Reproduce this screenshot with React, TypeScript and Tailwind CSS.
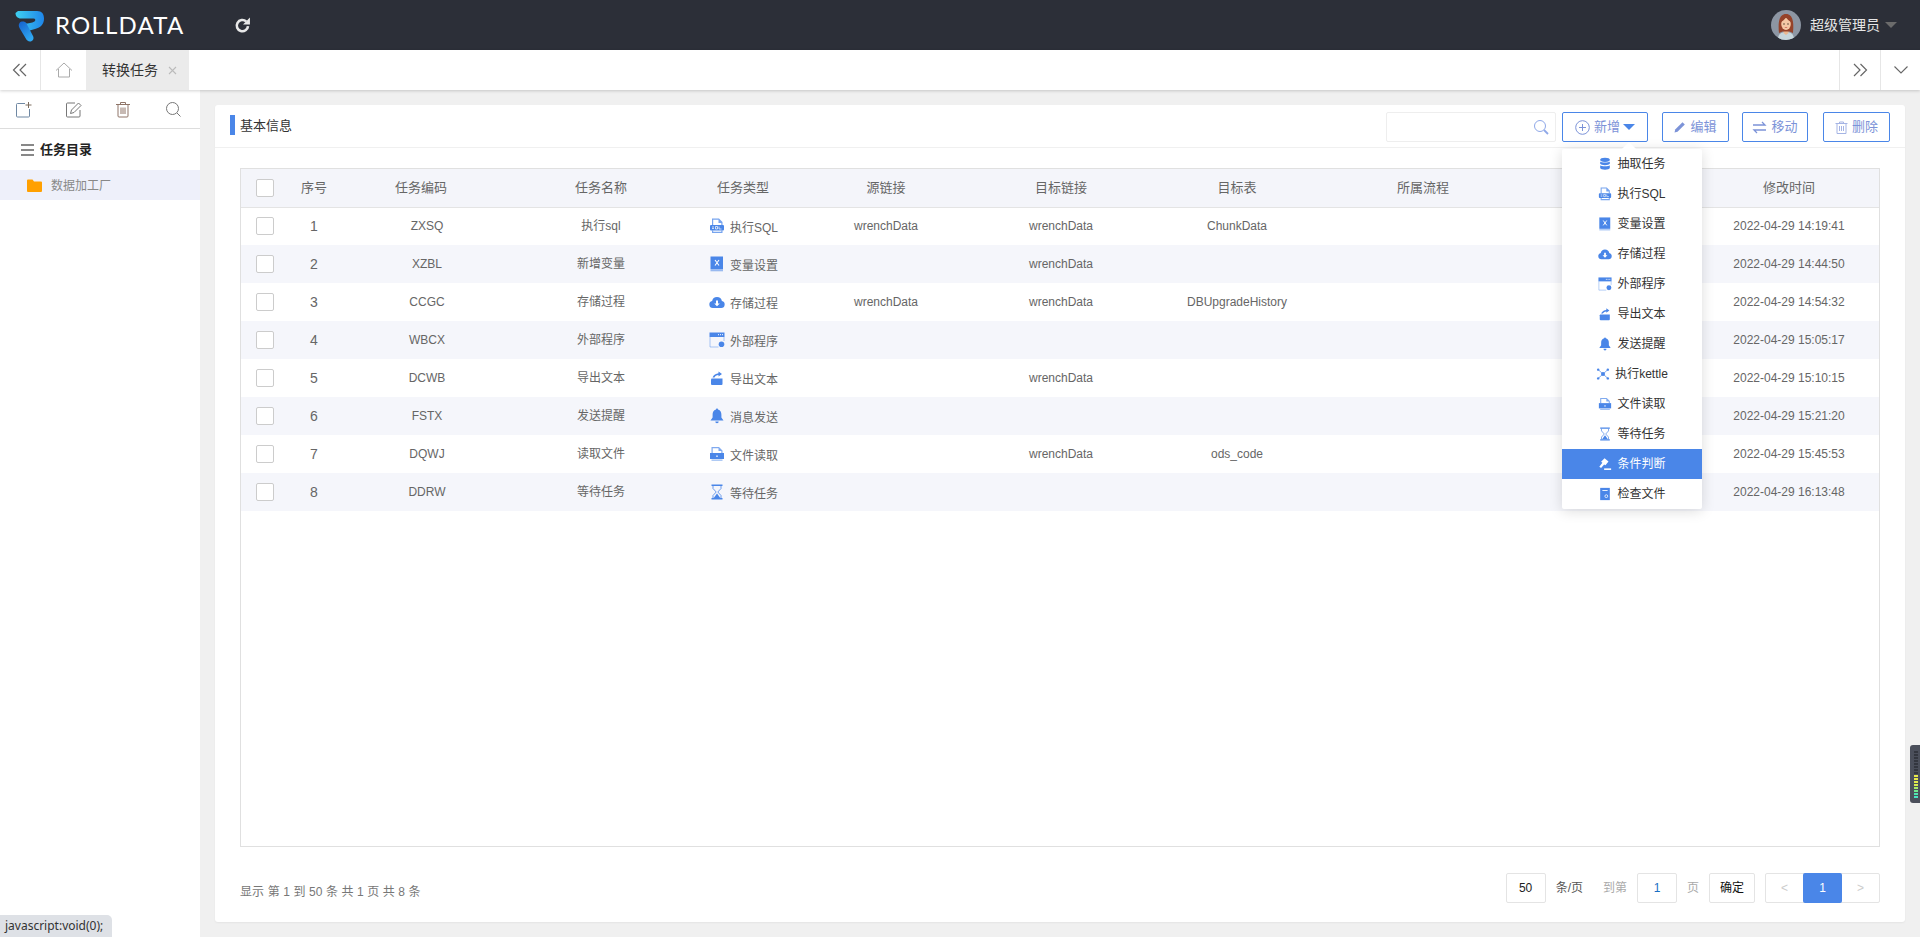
import { ReactNode } from "react";

type IconKind = "db" | "sql" | "xfile" | "cloud" | "window" | "export" | "bell" | "kettle" | "read" | "hourglass" | "gavel" | "check";

const BLUE = "#4a86e8";

function TaskIcon(props: { kind: IconKind; size?: number; color?: string }) {
    const c = props.color ?? BLUE;
    const paths: Record<IconKind, ReactNode> = {
        db: <>
            <ellipse cx="8" cy="3.2" rx="5.5" ry="2.4" fill={c} />
            <path d="M2.500 5.200c1 1.600 10 1.600 11 0v2.600c-1 2-10 2-11 0z" fill={c} />
            <path d="M2.500 9.400c1 1.600 10 1.600 11 0v3.200c-.6 2.600-10.400 2.600-11 0z" fill={c} />
        </>,
        sql: <>
            <path d="M3 .5h7l3.500 3.500v3h-1.200V5H9.500V1.700H4.200V7H3z" fill={c} opacity=".75" />
            <rect x="1" y="7" width="14" height="5.500" rx="1" fill={c} />
            <path d="M3 12.500h1.200v1.300h8.100v-1.300h1.200V15H3z" fill={c} opacity=".75" />
            <path d="M3 9h2M3 10.500h2M6.500 8.500h2v2.500h-2zM10 8.500V11h2.500" stroke="#fff" strokeWidth=".7" fill="none" />
        </>,
        xfile: <>
            <path d="M1.500 .5H14v13H1.500z" fill={c} />
            <path d="M1.500 14h12.500v1.300H1.500z" fill={c} opacity=".55" />
            <path d="M6 4l4 5.500M10 4L6 9.500" stroke="#fff" strokeWidth="1.100" />
        </>,
        cloud: <>
            <path d="M3.800 14a3.600 3.600 0 0 1-.7-7.100 5 5 0 0 1 9.800 0A3.600 3.600 0 0 1 12.200 14z" fill={c} />
            <path d="M7 6.500h2v3h1.800L8 12.300 5.200 9.500H7z" fill="#fff" />
        </>,
        window: <>
            <path d="M.5 .5h15v4.500H.5z" fill={c} />
            <path d="M1 5v10h8.500M15 5v4" stroke={c} strokeWidth=".9" fill="none" opacity=".5" />
            <circle cx="12.500" cy="12.300" r="2.800" fill={c} />
            <path d="M9 2.700h1M11 2.700h1M13 2.700h1" stroke="#fff" strokeWidth="1" />
        </>,
        export: <>
            <path d="M2.500 8.500h11V14a1 1 0 0 1-1 1h-9.500a1 1 0 0 1-1-1V9.500z" fill={c} />
            <path d="M3.500 7.500C4.500 5 7 3.500 9.500 3.300V1.500L13 4 9.500 6.500V5C7.500 5.200 6 6.200 5.500 7.500z" fill={c} />
        </>,
        bell: <>
            <path d="M8 .5c.7 0 1 .5 1 1 2.600.6 3.400 2.800 3.400 5.200v2.800L14.500 12.500h-13L3.600 9.500V6.700C3.600 4.300 4.400 2.100 7 1.500c0-.5.3-1 1-1z" fill={c} />
            <path d="M6.300 13.500h3.400A1.700 1.700 0 0 1 8 15.300a1.700 1.700 0 0 1-1.700-1.800z" fill={c} />
        </>,
        kettle: <>
            <circle cx="8" cy="8" r="2.300" fill={c} />
            <g stroke={c} strokeWidth=".8"><path d="M8 8L2.500 3M8 8l5.500-5M8 8l-5.500 5M8 8l5.500 5" /></g>
            <circle cx="2.500" cy="3" r="1.400" fill={c} /><circle cx="13.500" cy="3" r="1.400" fill={c} />
            <circle cx="2.500" cy="13" r="1.400" fill={c} /><circle cx="13.500" cy="13" r="1.400" fill={c} />
        </>,
        read: <>
            <path d="M2.500 1h7.500l3.500 3.500V7h-1.200V5H9.500V2.200H3.700V7H2.500z" fill={c} opacity=".7" />
            <rect x="1" y="7" width="14" height="6" fill={c} />
            <path d="M2.500 13.500h11v1.300h-11z" fill={c} opacity=".55" />
            <rect x="7.300" y="9.500" width="1.400" height="1.400" fill="#fff" />
        </>,
        hourglass: <>
            <path d="M2.500 .5h11V2h-11zM2.500 14h11v1.500h-11z" fill={c} />
            <path d="M4 2v2.500L7.200 8 4 11.500V14M12 2v2.500L8.800 8l3.200 3.500V14" stroke={c} strokeWidth="1" fill="none" opacity=".8" />
            <path d="M8 9.500l3.300 4.500H4.700z" fill={c} />
        </>,
        gavel: <>
            <path d="M7.500 1.500l4.500 3.500-3.500 4.500-1.500-1L3.500 12.500 1.500 11l3.500-4.500-1.500-1z" fill={c} />
            <path d="M7 13h8v1.800H7z" fill={c} />
        </>,
        check: <>
            <path d="M2.500 1h11v14h-11z" fill={c} />
            <path d="M5 4h6" stroke="#fff" strokeWidth="1" />
            <circle cx="9.500" cy="10.500" r="1.600" fill="none" stroke="#fff" strokeWidth=".9" />
        </>
    };
    const s = props.size ?? 16;
    return <svg width={s} height={s} viewBox="0 0 16 16" className="shrink-0">{paths[props.kind]}</svg>;
}

function Logo() {
    return <svg width="30" height="32" viewBox="0 0 30 32">
        <defs>
            <linearGradient id="lg1" x1="0" y1="0" x2="1" y2="0">
                <stop offset="0" stopColor="#3fd0f0" />
                <stop offset="1" stopColor="#1f86ea" />
            </linearGradient>
            <linearGradient id="lg2" x1="0" y1="0" x2="0.6" y2="1">
                <stop offset="0" stopColor="#1560cc" />
                <stop offset="1" stopColor="#2fa8f2" />
            </linearGradient>
        </defs>
        <path d="M3 1H22C27 1 29 4 29 8.500C29 14 26 17.500 20 19L13 21L10 13.500C13 13.500 17 13 19.500 11.500C21 10.500 20.500 8.500 18.500 8.500H6C2.500 8.500 0.500 6 0.500 3Z" fill="url(#lg1)" />
        <path d="M4.500 13C6 11 10 11 11.500 13.500L18 26C19.500 29 17.500 31.500 15 31.500C13 31.500 11.500 30 10.500 28L4.500 18C3.500 16 3.500 14.500 4.500 13Z" fill="url(#lg2)" />
    </svg>;
}

function Avatar() {
    return <svg width="30" height="30" viewBox="0 0 30 30" className="rounded-full">
        <rect width="30" height="30" fill="#8d96a3" />
        <path d="M7 30c0-6 3-8 8-8s8 2 8 8z" fill="#c7d6dc" />
        <path d="M12.500 18h5v5l-2.500 2-2.500-2z" fill="#eab892" />
        <path d="M8 23C7 14 7.500 4 15 4s8 10 7 19l-3.500-1.500H11.500z" fill="#96432a" />
        <ellipse cx="15" cy="14" rx="4.800" ry="6" fill="#f5c8a5" />
        <path d="M10 12c2-1 4-3 5-5 1 2 3 4 5 5 0-4-2-6-5-6s-5 2-5 6z" fill="#96432a" />
        <circle cx="13" cy="14" r=".7" fill="#3b2a20" /><circle cx="17" cy="14" r=".7" fill="#3b2a20" />
        <path d="M13.800 17.500h2.400" stroke="#c4584c" strokeWidth=".7" />
    </svg>;
}

function RefreshIcon() {
    return <svg width="17" height="17" viewBox="0 0 16 16" fill="none">
        <path d="M13.200 8.500A5.300 5.300 0 1 1 11.500 4.200" stroke="#e8e8e8" strokeWidth="2.400" />
        <path d="M8.500 7L15 7V.5z" fill="#e8e8e8" />
    </svg>;
}

function ChevronsLeft(props: { flip?: boolean }) {
    return <svg width="16" height="16" viewBox="0 0 16 16" fill="none" className={props.flip ? "rotate-180" : ""}>
        <path d="M7.500 2L1.500 8l6 6M14 2L8 8l6 6" stroke="#666" strokeWidth="1.200" />
    </svg>;
}

function HomeIcon() {
    return <svg width="18" height="16" viewBox="0 0 18 16" fill="none" stroke="#aaa" strokeWidth="1">
        <path d="M1 8.500L9 1l8 7.500M3.500 7v8h11V7" />
    </svg>;
}

const TOOL_STROKE = "#777";

function ToolIcon(props: { kind: "add" | "edit" | "del" | "search" }) {
    const p: Record<string, ReactNode> = {
        add: <>
            <path d="M10 2.500H2.500a1 1 0 0 0-1 1V15a1 1 0 0 0 1 1h11a1 1 0 0 0 1-1V8" stroke="#6f88a3" />
            <path d="M13.500 1v6M10.500 4h6" stroke="#7d6d5e" />
        </>,
        edit: <>
            <path d="M15 9v6a1 1 0 0 1-1 1H2.500a1 1 0 0 1-1-1V3a1 1 0 0 1 1-1H10" stroke={TOOL_STROKE} />
            <path d="M5.500 12.500l1-3.500 7-7 2.500 2.500-7 7z" stroke={TOOL_STROKE} />
        </>,
        del: <>
            <path d="M1 3.500h14M5.500 3.500V1.500h5v2M3 3.500V15a1 1 0 0 0 1 1h8a1 1 0 0 0 1-1V3.500" stroke="#8f7568" />
            <path d="M6 6.500v6.500M8 6.500v6.500M10 6.500v6.500" stroke="#8f7568" />
        </>,
        search: <>
            <circle cx="7.500" cy="7.500" r="6" stroke={TOOL_STROKE} />
            <path d="M12 12l3.500 3.500" stroke={TOOL_STROKE} />
        </>
    };
    return <svg width="17" height="17" viewBox="0 0 17 17" fill="none">{p[props.kind]}</svg>;
}

function ActionButton(props: { icon: ReactNode; label: string; w: string; caret?: boolean }) {
    return <button className={"h-[30px] border border-[#4a86e8] rounded-[2px] bg-white flex items-center justify-center gap-[4px] text-[13px] text-[#7c93d8] " + props.w}>
        {props.icon}
        <span>{props.label}</span>
        {props.caret && <span className="-ml-[1px] w-0 h-0 border-x-[6px] border-x-transparent border-t-[6px] border-t-[#4a86e8]" />}
    </button>;
}

const MENU: { kind: IconKind; label: string }[] = [
    { kind: "db", label: "抽取任务" },
    { kind: "sql", label: "执行SQL" },
    { kind: "xfile", label: "变量设置" },
    { kind: "cloud", label: "存储过程" },
    { kind: "window", label: "外部程序" },
    { kind: "export", label: "导出文本" },
    { kind: "bell", label: "发送提醒" },
    { kind: "kettle", label: "执行kettle" },
    { kind: "read", label: "文件读取" },
    { kind: "hourglass", label: "等待任务" },
    { kind: "gavel", label: "条件判断" },
    { kind: "check", label: "检查文件" }
];

const ROWS: { code: string; name: string; kind: IconKind; type: string; src: string; dst: string; table: string; time: string }[] = [
    { code: "ZXSQ", name: "执行sql", kind: "sql", type: "执行SQL", src: "wrenchData", dst: "wrenchData", table: "ChunkData", time: "2022-04-29 14:19:41" },
    { code: "XZBL", name: "新增变量", kind: "xfile", type: "变量设置", src: "", dst: "wrenchData", table: "", time: "2022-04-29 14:44:50" },
    { code: "CCGC", name: "存储过程", kind: "cloud", type: "存储过程", src: "wrenchData", dst: "wrenchData", table: "DBUpgradeHistory", time: "2022-04-29 14:54:32" },
    { code: "WBCX", name: "外部程序", kind: "window", type: "外部程序", src: "", dst: "", table: "", time: "2022-04-29 15:05:17" },
    { code: "DCWB", name: "导出文本", kind: "export", type: "导出文本", src: "", dst: "wrenchData", table: "", time: "2022-04-29 15:10:15" },
    { code: "FSTX", name: "发送提醒", kind: "bell", type: "消息发送", src: "", dst: "", table: "", time: "2022-04-29 15:21:20" },
    { code: "DQWJ", name: "读取文件", kind: "read", type: "文件读取", src: "", dst: "wrenchData", table: "ods_code", time: "2022-04-29 15:45:53" },
    { code: "DDRW", name: "等待任务", kind: "hourglass", type: "等待任务", src: "", dst: "", table: "", time: "2022-04-29 16:13:48" }
];

function Checkbox() {
    return <div className="w-[18px] h-[18px] mx-auto bg-white border border-[#ccc] rounded-[2px]" />;
}

const HEADERS = ["序号", "任务编码", "任务名称", "任务类型", "源链接", "目标链接", "目标表", "所属流程", "", "修改时间"];

function Header() {
    return <div className="h-[50px] shrink-0 bg-[#2c2f38] flex items-center">
        <div className="ml-[15px] mt-[1px]"><Logo /></div>
        <div className="ml-[10px] text-[24px] tracking-[1.200px] text-white [font-family:Lato,sans-serif] leading-none">ROLLDATA</div>
        <div className="ml-[50px] flex"><RefreshIcon /></div>
        <div className="ml-auto flex items-center">
            <Avatar />
            <span className="ml-[9px] text-[14px] text-[#e6e6e6]">超级管理员</span>
            <span className="ml-[5px] mr-[23px] w-0 h-0 border-x-[6px] border-x-transparent border-t-[6px] border-t-[#6b6b6b]" />
        </div>
    </div>;
}

function TabBar() {
    return <div className="h-[40px] shrink-0 bg-white flex items-stretch shadow-[0_1px_3px_rgba(0,0,0,0.18)] relative z-10">
        <div className="w-[41px] border-r border-[#e6e6e6] flex items-center justify-center"><ChevronsLeft /></div>
        <div className="w-[45px] flex items-center justify-center"><HomeIcon /></div>
        <div className="w-[103px] bg-[#ebebeb] flex items-center pl-[16px] text-[14px] text-[#333]">
            <span>转换任务</span>
            <svg width="9" height="9" viewBox="0 0 9 9" className="ml-[10px]"><path d="M1 1l7 7M8 1L1 8" stroke="#bbb" strokeWidth="1.100" /></svg>
        </div>
        <div className="ml-auto w-[41px] border-l border-[#e6e6e6] flex items-center justify-center"><ChevronsLeft flip /></div>
        <div className="w-[40px] border-l border-[#e6e6e6] flex items-center justify-center">
            <svg width="16" height="10" viewBox="0 0 16 10" fill="none"><path d="M1.500 1.500L8 8l6.500-6.500" stroke="#666" strokeWidth="1.100" /></svg>
        </div>
    </div>;
}

function Sidebar() {
    return <div className="w-[200px] shrink-0 bg-white flex flex-col">
        <div className="h-[39px] border-b border-[#ddd] flex items-center justify-between pl-[15px] pr-[18px] shrink-0">
            <ToolIcon kind="add" />
            <ToolIcon kind="edit" />
            <ToolIcon kind="del" />
            <ToolIcon kind="search" />
        </div>
        <div className="h-[41px] flex items-center pl-[21px] shrink-0">
            <svg width="13" height="12" viewBox="0 0 13 12"><path d="M0 1h13M0 6h13M0 11h13" stroke="#888" strokeWidth="2" /></svg>
            <span className="ml-[6px] text-[13px] font-bold text-[#222]">任务目录</span>
        </div>
        <div className="h-[30px] bg-[#eef0fa] flex items-center pl-[27px] shrink-0">
            <svg width="15" height="13" viewBox="0 0 15 13"><path d="M0 1.500a1 1 0 0 1 1-1h4.500L7 2.500h7a1 1 0 0 1 1 1V12a1 1 0 0 1-1 1H1a1 1 0 0 1-1-1z" fill="#ffa000" /></svg>
            <span className="ml-[9px] mt-[2px] text-[12px] text-[#888]">数据加工厂</span>
        </div>
    </div>;
}

function Toolbar() {
    return <div className="h-[43px] shrink-0 border-b border-[#f0f0f0] flex items-start pt-[7px] pl-[15px]">
        <div className="w-[5px] h-[20px] mt-[3px] bg-[#4a86e8]" />
        <span className="ml-[5px] mt-[4px] text-[13px] text-[#333]">基本信息</span>
        <div className="ml-auto flex items-center pr-[15px]">
            <div className="w-[170px] h-[30px] border border-[#eee] rounded-[2px] bg-white flex items-center justify-end pr-[6px]">
                <svg width="16" height="16" viewBox="0 0 16 16" fill="none"><circle cx="7" cy="7" r="5.500" stroke="#8fa8e8" /><path d="M11 11l4 4" stroke="#8fa8e8" strokeWidth="1.800" /></svg>
            </div>
            <div className="ml-[6px]"><ActionButton w="w-[86px]" caret label="新增" icon={
                <svg width="15" height="15" viewBox="0 0 15 15" fill="none"><circle cx="7.500" cy="7.500" r="6.800" stroke="#7c93d8" /><path d="M7.500 4v7M4 7.500h7" stroke="#7c93d8" /></svg>
            } /></div>
            <div className="ml-[14px]"><ActionButton w="w-[67px]" label="编辑" icon={
                <svg width="12" height="12" viewBox="0 0 12 12"><path d="M0.500 11.500l.7-3L8.500 1.200l2.300 2.300L3.500 10.800z" fill="#7c93d8" /></svg>
            } /></div>
            <div className="ml-[13px]"><ActionButton w="w-[66px]" label="移动" icon={
                <svg width="15" height="13" viewBox="0 0 15 13" fill="none"><path d="M1 4h12L10 1M14 9H2l3 3" stroke="#7c93d8" strokeWidth="1.300" /></svg>
            } /></div>
            <div className="ml-[15px]"><ActionButton w="w-[67px]" label="删除" icon={
                <svg width="13" height="13" viewBox="0 0 13 13" fill="none"><path d="M0.500 2.500h12M4.500 2.500V1h4v1.500M2 2.500V12.500h9V2.500M4.500 5v5M6.500 5v5M8.500 5v5" stroke="#a5b4e4" /></svg>
            } /></div>
        </div>
    </div>;
}

function DataTable() {
    const colWidths = [48, 50, 164, 196, 88, 198, 152, 200, 172, 190, 180];
    return <div className="h-[679px] border border-[#e0e0e0] overflow-hidden">
        <table className="table-fixed w-[1638px] border-collapse">
            <colgroup>
                {colWidths.map((w, i) => <col key={i} style={{ width: w }} />)}
            </colgroup>
            <thead>
                <tr className="h-[38px] bg-[#f4f5fa] border-b border-[#e4e4e4]">
                    <th className="font-normal"><Checkbox /></th>
                    {HEADERS.map((h, i) => <th key={i} className="font-normal text-[13px] text-[#666]">{h}</th>)}
                </tr>
            </thead>
            <tbody>
                {ROWS.map((r, i) => <tr key={r.code} className={"h-[38px] text-[12px] text-[#666] text-center " + (i % 2 === 1 ? "bg-[#f5f6fb]" : "bg-white")}>
                    <td><Checkbox /></td>
                    <td className="text-[14px]">{i + 1}</td>
                    <td className="pl-[12px]">{r.code}</td>
                    <td>{r.name}</td>
                    <td>
                        <div className="flex items-center justify-center gap-[5px] pl-[1px]">
                            <TaskIcon kind={r.kind} />
                            <span className="mt-[3px]">{r.type}</span>
                        </div>
                    </td>
                    <td>{r.src}</td>
                    <td>{r.dst}</td>
                    <td>{r.table}</td>
                    <td></td>
                    <td></td>
                    <td>{r.time}</td>
                </tr>)}
            </tbody>
        </table>
    </div>;
}

function Pager() {
    const box = "h-[30px] border border-[#e4e4e4] bg-white rounded-[2px] flex items-center justify-center text-[12px]";
    return <div className="flex items-center text-[12px]">
        <div className={box + " w-[40px] text-[#222]"}>50</div>
        <span className="ml-[10px] text-[#555]">条/页</span>
        <span className="ml-[20px] text-[#aaa]">到第</span>
        <div className={box + " ml-[10px] w-[40px] text-[#1a6fc4]"}>1</div>
        <span className="ml-[10px] text-[#aaa]">页</span>
        <div className={box + " ml-[10px] w-[46px] text-[#111]"}>确定</div>
        <div className="ml-[10px] h-[30px] w-[115px] border border-[#e4e4e4] rounded-[2px] flex">
            <div className="w-[37px] flex items-center justify-center text-[#ccc]">&lt;</div>
            <div className="w-[39px] -my-[1px] bg-[#4a86e8] rounded-[2px] text-white flex items-center justify-center">1</div>
            <div className="w-[37px] flex items-center justify-center text-[#ccc]">&gt;</div>
        </div>
    </div>;
}

function DropMenu() {
    return <div className="absolute left-[1562px] top-[149px] w-[140px] bg-white rounded-[2px] shadow-[0_2px_14px_rgba(0,0,0,0.14)] z-20">
        <div className="absolute -top-[5px] left-[62px] w-[10px] h-[10px] bg-white rotate-45" />
        {MENU.map((m, i) => {
            const active = i === 10;
            return <div key={m.label} className={"relative h-[30px] flex items-center justify-center gap-[5px] text-[12px] " + (active ? "bg-[#4a86e8] text-white" : "text-[#333]")}>
                <TaskIcon kind={m.kind} size={14} color={active ? "#fff" : BLUE} />
                <span>{m.label}</span>
            </div>;
        })}
    </div>;
}

function MeterWidget() {
    const bars = ["#33363f", "#33363f", "#33363f", "#33363f", "#33363f", "#33363f", "#33363f", "#33363f", "#e8e84a", "#e8e84a", "#e4ea4c", "#d8ea50", "#a8ec66", "#70e890", "#50e4b0", "#48e4c4"];
    return <div className="absolute right-0 top-[745px] w-[10px] h-[58px] bg-[#4b4f5b] rounded-l-[3px] z-20 flex flex-col items-center justify-center gap-[1px] pl-[1px]">
        {bars.map((b, i) => <div key={i} className="w-[4px] h-[2px]" style={{ background: b }} />)}
    </div>;
}

export default function App() {
    return <div className="relative w-screen h-screen overflow-hidden flex flex-col bg-[#f0f0f0] [font-family:'Liberation_Sans','Noto_Sans_CJK_SC',sans-serif]">
        <Header />
        <TabBar />
        <div className="flex-1 flex min-h-0">
            <Sidebar />
            <div className="flex-1 min-w-0 pl-[15px] pt-[15px] pr-[15px] pb-[15px]">
                <div className="h-full bg-white rounded-[3px] flex flex-col shadow-[0_1px_2px_rgba(0,0,0,0.05)]">
                    <Toolbar />
                    <div className="px-[25px] pt-[20px]">
                        <DataTable />
                        <div className="mt-[26px] flex items-center justify-between">
                            <span className="mt-[7px] text-[12px] text-[#777] tracking-[0.1px]">显示 第 1 到 50 条 共 1 页 共 8 条</span>
                            <Pager />
                        </div>
                    </div>
                </div>
            </div>
        </div>
        <DropMenu />
        <MeterWidget />
        <div className="absolute left-0 bottom-0 h-[22px] w-[112px] bg-[#dee1e6] rounded-tr-[5px] pl-[5px] flex items-center text-[12px] text-[#333] [font-family:'Noto_Sans',sans-serif] z-30">javascript:void(0);</div>
    </div>;
}
